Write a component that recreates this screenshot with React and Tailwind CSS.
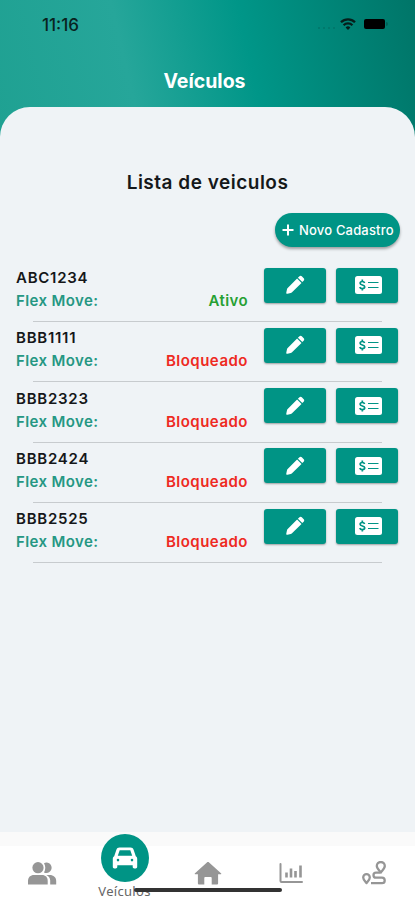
import React from 'react';

const vehicles = [
  { plate: 'ABC1234', status: 'Ativo', active: true },
  { plate: 'BBB1111', status: 'Bloqueado' },
  { plate: 'BBB2323', status: 'Bloqueado' },
  { plate: 'BBB2424', status: 'Bloqueado' },
  { plate: 'BBB2525', status: 'Bloqueado' },
];

function WifiIcon() {
  return (
    <svg viewBox="0 0 16 12" className="w-4 h-3" fill="none" stroke="#061e1b" strokeWidth="2.3">
      <path d="M1 4.3a10 10 0 0 1 14 0M3.6 7.3a6.2 6.2 0 0 1 8.8 0" />
      <path d="M8 12 5.6 9.600a3.300 3.300 0 0 1 4.800 0z" fill="#061e1b" stroke="none" />
    </svg>
  );
}

function PlusIcon() {
  return (
    <svg viewBox="0 0 12 12" className="h-3 w-3" stroke="#fff" strokeWidth="2">
      <path d="M6 .5v11M.5 6h11" />
    </svg>
  );
}

function PencilIcon() {
  return (
    <svg viewBox="0 0 20 20" className="h-5 w-5" fill="#fff">
      <path d="M12.100 3.500 16.500 7.900 7 17.300c-.4.4-.8.600-1.300.7l-3.200.7c-.9.200-1.400-.3-1.200-1.200l.7-3.200c.1-.5.300-.9.700-1.300z" />
      <path d="m12.900 2.700 1.300-1.300c.8-.8 1.900-.8 2.600-.1l1.900 1.900c.7.700.7 1.800-.1 2.600l-1.300 1.300z" />
    </svg>
  );
}

function MoneyIcon() {
  return (
    <svg viewBox="0 0 27 18" className="w-[27px] h-[18px]" fill="none" stroke="#009485">
      <rect width="27" height="18" rx="2.500" fill="#fff" stroke="none" />
      <path d="M9.600 6.900C9.300 6 8.400 5.500 7.300 5.500c-1.400 0-2.200.7-2.200 1.700 0 2.300 4.600 1.300 4.600 3.600 0 1.100-.9 1.800-2.400 1.800-1.300 0-2.200-.5-2.500-1.600M7.300 3.600v2M7.300 12.400v2" strokeWidth="1.700" />
      <path d="M13 6.500h10.500M13 11.500h10.500" strokeWidth="1.200" />
    </svg>
  );
}

function PeopleIcon() {
  return (
    <svg viewBox="0 0 30 24" className="h-6 w-[30px]" fill="currentColor">
      <circle cx="11" cy="6.700" r="5.600" />
      <path d="M1 23.500v-3.500c0-3.800 2.500-6 6-6h8c3.500 0 5.700 2.200 5.700 6v3.500z" />
      <path d="M17 2.200a5.200 5.200 0 1 1 0 9.200c1.700-2.700 1.700-6.500 0-9.200z" />
      <path d="M19.300 14h3.300c4 0 6.600 2.400 6.600 6v3.500h-6v-4c0-2.300-1.500-4.300-3.900-5.500z" />
    </svg>
  );
}

function CarIcon() {
  return (
    <svg viewBox="0 0 26 24" className="h-6 w-[26px]" fill="#fff">
      <path
        fillRule="evenodd"
        d="M7.500 1.500h11c1.600 0 2.600.8 3.100 2.300l2.200 6.400c.9.600 1.400 1.500 1.400 2.600v8c0 1-.6 1.700-1.600 1.700h-1.200c-1 0-1.700-.7-1.700-1.700v-1.500H5.300v1.500c0 1-.7 1.700-1.700 1.700H2.400c-1 0-1.600-.7-1.600-1.700v-8c0-1.100.5-2 1.400-2.600l2.200-6.400c.5-1.500 1.500-2.300 3.100-2.300zM7.700 4.300 5.800 9.800h14.400l-1.900-5.500zM6 12.800a1.300 1.300 0 1 0 0 2.600 1.300 1.300 0 0 0 0-2.600zM20 12.800a1.300 1.300 0 1 0 0 2.600 1.300 1.300 0 0 0 0-2.600z"
      />
    </svg>
  );
}

function HomeIcon() {
  return (
    <svg viewBox="0 0 28 24" className="h-6 w-7" fill="currentColor">
      <path d="M12.900 1.400c.7-.6 1.500-.6 2.200 0L27 12.300c.5.500.3 1-.4 1h-2.500v8.900c0 .8-.5 1.300-1.300 1.300h-5.100v-6.300c0-.7-.4-1.100-1.100-1.100h-5.200c-.7 0-1.100.4-1.100 1.100v6.300H5.200c-.8 0-1.300-.5-1.300-1.300v-8.900H1.400c-.7 0-.9-.5-.4-1z" />
    </svg>
  );
}

function ChartIcon() {
  return (
    <svg viewBox="0 0 24 22" className="w-6 h-[22px]" fill="none" stroke="#969696" strokeWidth="2" strokeLinecap="round">
      <path d="M1.500 2v17a1 1 0 0 0 1 1H23" />
      <path d="M7.500 10.500v5M12 6.500v9M16.500 9v6.500M21.500 3.500v12" strokeWidth="2.600" strokeLinecap="butt" />
    </svg>
  );
}

function RouteIcon() {
  return (
    <svg viewBox="0 0 24 24" className="w-6 h-6" fill="none" stroke="#969696" strokeWidth="2.300" strokeLinejoin="round">
      <path d="M18.800 11.500c-1.500-2-4-4.200-4-6.500a4 4 0 0 1 8 0c0 2.300-2.500 4.500-4 6.500z" />
      <path d="M4.500 22c-1.200-1.700-3.300-3.500-3.300-5.600a3.300 3.300 0 0 1 6.600 0c0 2.100-2.100 3.900-3.300 5.600z" />
      <path d="M18 11.700h-4a2.500 2.500 0 0 0 0 5h6a2.700 2.700 0 0 1 0 5.400H9" />
    </svg>
  );
}

function VehicleRow({ plate, status, active }) {
  return (
    <div className="h-[60.3px]">
      <div className="flex h-[54px] pl-4 pr-[17px]">
        <div className="w-[232px] pt-[1px] text-[15px] font-semibold">
          <div className="h-[23px] leading-[20px] tracking-[0.75px] text-[#151719]">{plate}</div>
          <div className="flex justify-between leading-[20px] tracking-[0.4px]">
            <span className="text-[#259783]">Flex Move:</span>
            <span className={active ? 'text-[#26a033]' : 'text-[#ee2922] tracking-[0.5px]'}>{status}</span>
          </div>
        </div>
        <div className="ml-4 flex gap-[10px] pt-[0.5px]">
          <button className="flex h-[35px] w-[62px] items-center justify-center rounded-[3px] bg-[#009485] shadow-[0_1px_2px_rgba(0,0,0,0.35)]">
            <PencilIcon />
          </button>
          <button className="flex h-[35px] w-[62px] items-center justify-center rounded-[3px] bg-[#009485] pl-[2px] shadow-[0_1px_2px_rgba(0,0,0,0.35)]">
            <MoneyIcon />
          </button>
        </div>
      </div>
      <div className="ml-[33px] h-px w-[349px] bg-[#c7cbce]" />
    </div>
  );
}

export default function App() {
  return (
    <div className="flex h-[900px] w-[415px] flex-col overflow-hidden bg-[linear-gradient(77deg,#1fa192_0%,#26a69a_32%,#009688_60%,#007568_100%)] bg-[length:415px_140px] bg-no-repeat font-['Inter','Liberation_Sans',sans-serif]">
      <header className="h-[107px] shrink-0">
        <div className="flex h-12 items-center pl-[42px] pr-[26px]">
          <span className="pt-[2px] text-[17px] font-medium leading-[24px] text-[#09231f]">11:16</span>
          <div className="ml-auto flex items-center">
            <div className="mr-[5px] mt-2 flex gap-[3px]">
              {[0, 1, 2, 3].map((i) => (
                <span key={i} className="h-[2px] w-[2px] rounded-full bg-[#007468]" />
              ))}
            </div>
            <WifiIcon />
            <span className="ml-2 h-[10px] w-[21px] rounded-[2px] bg-black" />
            <span className="ml-px mr-px h-1 w-[2px] rounded-r bg-[#006258]" />
          </div>
        </div>
        <h1 className="pt-[19px] pr-[6px] text-center text-[19.5px] font-bold leading-[28px] text-white">Veículos</h1>
      </header>

      <main className="flex-1 rounded-t-[30px] bg-[#eff3f6]">
        <h2 className="pt-[62px] text-center text-[19px] font-semibold leading-[28px] tracking-[0.5px] text-[#15181a]">Lista de veiculos</h2>
        <div className="mt-4 flex justify-end pr-[15px]">
          <button className="flex h-[34px] w-[125px] items-center gap-[5px] rounded-full bg-[#009485] pl-[7px] text-[13px] font-medium tracking-[0.18px] text-white shadow-[0_2px_3px_rgba(0,0,0,0.35)]">
            <PlusIcon />
            <span className="whitespace-nowrap pt-px">Novo Cadastro</span>
          </button>
        </div>
        <div className="mt-5">
          {vehicles.map((v) => (
            <VehicleRow key={v.plate} {...v} />
          ))}
        </div>
      </main>

      <nav className="relative h-[68px] shrink-0 border-t-[14px] border-[#fafafa] bg-white text-[#969696]">
        <div className="grid h-[54px] grid-cols-5 place-items-center">
          <PeopleIcon />
          <div className="relative flex h-full w-full justify-center">
            <div className="absolute -top-[12px] flex h-12 w-12 items-center justify-center rounded-full bg-[#009485]">
              <CarIcon />
            </div>
            <span className="mt-[36px] text-[13px] leading-[18px] tracking-[0.3px] text-[#666] font-['Noto_Sans',sans-serif]">Veículos</span>
          </div>
          <HomeIcon />
          <ChartIcon />
          <RouteIcon />
        </div>
        <div className="absolute left-[134px] top-[42px] h-1 w-[148px] rounded-full bg-[#333]" />
      </nav>
    </div>
  );
}
